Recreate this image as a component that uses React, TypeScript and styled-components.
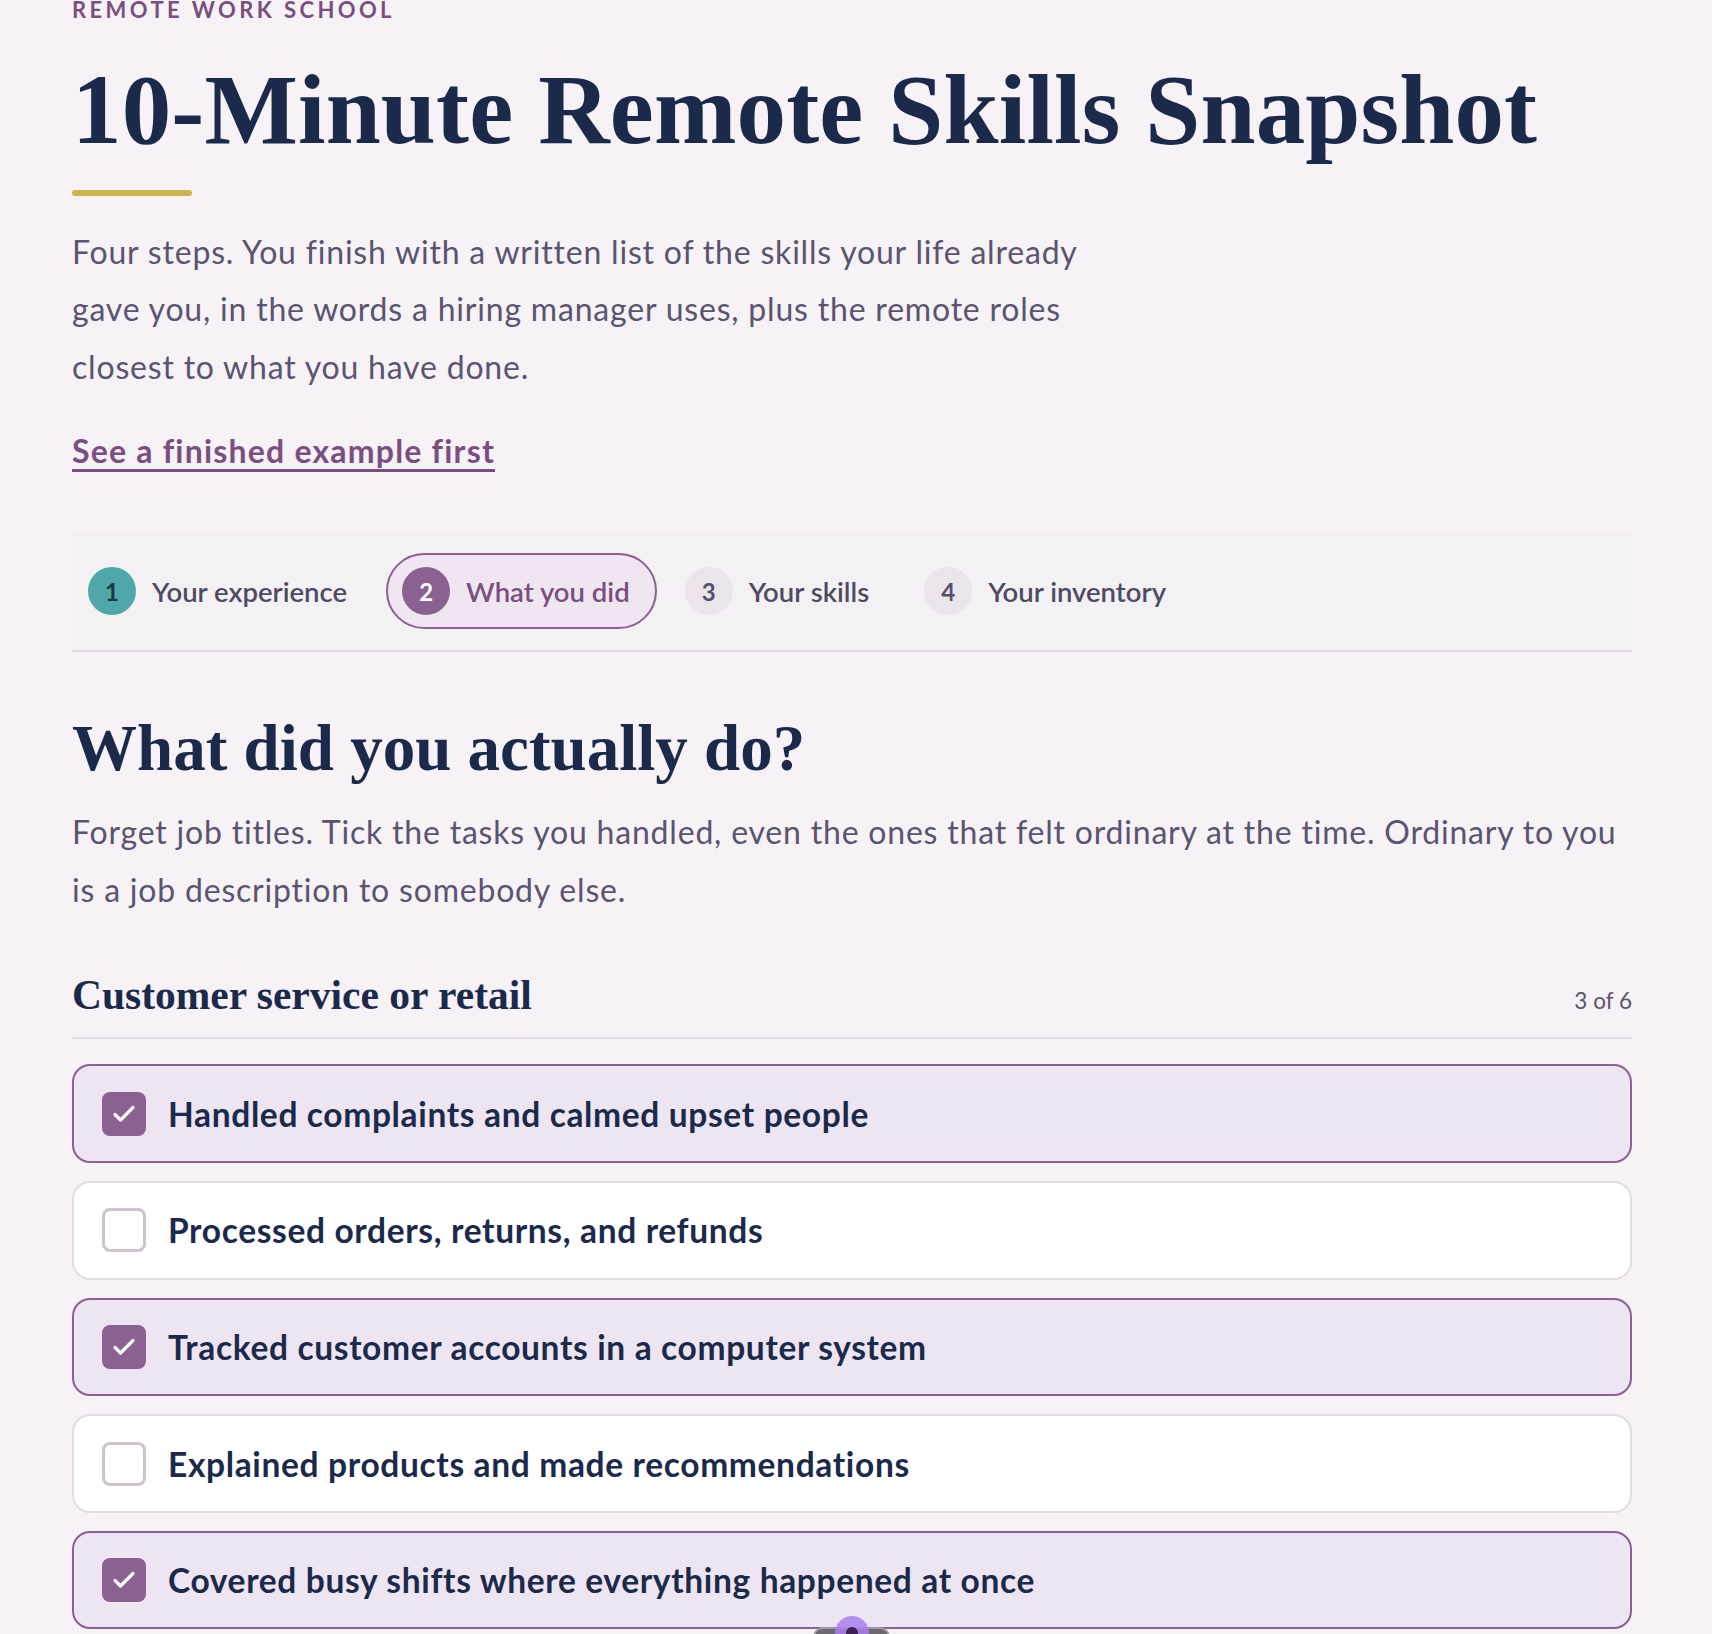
import styled, { createGlobalStyle, css } from 'styled-components';

const GlobalStyle = createGlobalStyle`
  html, body {
    margin: 0;
    padding: 0;
    background: #f6f2f6;
  }
  body {
    font-family: Lato, "Noto Sans", sans-serif;
    color: #1b2a4b;
    overflow: hidden;
  }
  * {
    box-sizing: border-box;
  }
`;

const SERIF = `"Liberation Serif", "DejaVu Serif", serif`;

const Page = styled.main`
  width: 1560px;
  margin-left: 72px;
`;

const Eyebrow = styled.p`
  margin: 0;
  font-size: 22px;
  line-height: 20px;
  font-weight: 700;
  letter-spacing: 0.155em;
  text-transform: uppercase;
  color: #7a4f80;
`;

const Title = styled.h1`
  margin: 36px 0 0;
  font-family: ${SERIF};
  font-size: 99px;
  line-height: 1.1;
  font-weight: 700;
  color: #1b2a4b;
  letter-spacing: 0.15px;
`;

// 제목 아래 금색 강조선
const Accent = styled.div`
  width: 120px;
  height: 6px;
  margin-top: 25px;
  border-radius: 3px;
  background: #cdb54c;
`;

const Lead = styled.p<{ $width?: number; $gap: number }>`
  margin: ${({ $gap }) => $gap}px 0 0;
  max-width: ${({ $width }) => ($width ? `${$width}px` : 'none')};
  font-size: 32px;
  line-height: 57.6px;
  letter-spacing: 0.8px;
  color: #5a5470;
`;

const ExampleLink = styled.a`
  display: inline-block;
  margin-top: 26px;
  font-size: 32px;
  line-height: 57.6px;
  font-weight: 700;
  letter-spacing: 1.2px;
  color: #7a4f80;
  text-decoration: underline;
  text-decoration-thickness: 3px;
  text-underline-offset: 6px;
  cursor: pointer;
`;

const Stepper = styled.nav`
  display: flex;
  align-items: center;
  gap: 12px;
  margin-top: 53px;
  padding: 21px 0;
  background: #f3f1f3;
  border-bottom: 2px solid #dedadf;
`;

const Step = styled.div<{ $active?: boolean }>`
  display: flex;
  align-items: center;
  gap: 16px;
  height: 76px;
  padding: 0 25px 0 14px;
  border: 2px solid transparent;
  border-radius: 38px;
  font-size: 27.5px;
  font-weight: 600;
  color: #4f4a63;

  ${({ $active }) =>
    $active &&
    css`
      border-color: #8a6191;
      background: #efe6f2;
      color: #7a4f80;
    `}
`;

type StepState = 'done' | 'current' | 'todo';

const stepColors: Record<StepState, { bg: string; fg: string }> = {
  done: { bg: '#4fa7aa', fg: '#173a46' },
  current: { bg: '#8a6191', fg: '#ffffff' },
  todo: { bg: '#ece4ec', fg: '#55506a' },
};

const StepNumber = styled.span<{ $state: StepState }>`
  display: flex;
  align-items: center;
  justify-content: center;
  width: 48px;
  height: 48px;
  border-radius: 50%;
  font-size: 24px;
  font-weight: 700;
  background: ${({ $state }) => stepColors[$state].bg};
  color: ${({ $state }) => stepColors[$state].fg};
`;

const SectionTitle = styled.h2`
  margin: 57px 0 0;
  font-family: ${SERIF};
  font-size: 65px;
  line-height: 1.2;
  font-weight: 700;
  color: #1b2a4b;
`;

const GroupHeader = styled.div`
  display: flex;
  justify-content: space-between;
  align-items: baseline;
  margin-top: 53px;
  padding-bottom: 18px;
  border-bottom: 2px solid #dedadf;
`;

const GroupTitle = styled.h3`
  margin: 0;
  font-family: ${SERIF};
  font-size: 41.5px;
  line-height: 48px;
  font-weight: 700;
  color: #1b2a4b;
`;

const GroupCount = styled.span`
  font-size: 22.5px;
  color: #5a5470;
`;

const TaskList = styled.ul`
  display: flex;
  flex-direction: column;
  gap: 18px;
  margin: 25px 0 0;
  padding: 0;
  list-style: none;
`;

const TaskRow = styled.li<{ $checked: boolean }>`
  display: flex;
  align-items: center;
  gap: 22px;
  height: 98.6px;
  padding: 0 28px;
  border: 2px solid ${({ $checked }) => ($checked ? '#8a6191' : '#e2dde3')};
  border-radius: 18px;
  background: ${({ $checked }) => ($checked ? '#ede5f1' : '#ffffff')};
  font-size: 33.5px;
  font-weight: 700;
  letter-spacing: 0.65px;
  color: #1b2a4b;
  cursor: pointer;
`;

const Checkbox = styled.span<{ $checked: boolean }>`
  display: flex;
  align-items: center;
  justify-content: center;
  flex: none;
  width: 44px;
  height: 44px;
  border-radius: 8px;
  border: 3px solid ${({ $checked }) => ($checked ? '#8a6191' : '#cec3cf')};
  background: ${({ $checked }) => ($checked ? '#8a6191' : '#ffffff')};
`;

// 화면 하단에 걸쳐 있는 떠 있는 도구 배지
const FloatingDock = styled.div`
  position: fixed;
  left: 813px;
  top: 1627px;
  width: 77px;
  height: 30px;
  border-radius: 10px;
  border: 2px solid #a09ca2;
  background: #6e6971;
`;

const FloatingDot = styled.div`
  position: fixed;
  left: 835px;
  top: 1616px;
  width: 34px;
  height: 34px;
  border-radius: 50%;
  background: rgba(170, 128, 240, 0.85);
  display: flex;
  justify-content: center;
  padding-top: 11px;

  &::after {
    content: '';
    width: 12px;
    height: 12px;
    border-radius: 50%;
    background: #3c2252;
  }
`;

const steps: { label: string; state: StepState }[] = [
  { label: 'Your experience', state: 'done' },
  { label: 'What you did', state: 'current' },
  { label: 'Your skills', state: 'todo' },
  { label: 'Your inventory', state: 'todo' },
];

const tasks = [
  { text: 'Handled complaints and calmed upset people', checked: true },
  { text: 'Processed orders, returns, and refunds', checked: false },
  { text: 'Tracked customer accounts in a computer system', checked: true },
  { text: 'Explained products and made recommendations', checked: false },
  { text: 'Covered busy shifts where everything happened at once', checked: true },
];

const CheckMark = () => (
  <svg width="26" height="26" viewBox="0 0 26 26" fill="none">
    <path
      d="M4 13.5l5.5 5.5L22 6.5"
      stroke="#ffffff"
      strokeWidth="3.2"
      strokeLinecap="round"
      strokeLinejoin="round"
    />
  </svg>
);

const App = () => {
  const checkedCount = tasks.filter((task) => task.checked).length;

  return (
    <>
      <GlobalStyle />
      <Page>
        <Eyebrow>Remote Work School</Eyebrow>
        <Title>10-Minute Remote Skills Snapshot</Title>
        <Accent />
        <Lead $gap={27} $width={1020}>
          Four steps. You finish with a written list of the skills your life already gave you, in
          the words a hiring manager uses, plus the remote roles closest to what you have done.
        </Lead>
        <ExampleLink>See a finished example first</ExampleLink>

        <Stepper>
          {steps.map((step, index) => (
            <Step key={step.label} $active={step.state === 'current'}>
              <StepNumber $state={step.state}>{index + 1}</StepNumber>
              {step.label}
            </Step>
          ))}
        </Stepper>

        <SectionTitle>What did you actually do?</SectionTitle>
        <Lead $gap={16}>
          Forget job titles. Tick the tasks you handled, even the ones that felt ordinary at the
          time. Ordinary to you is a job description to somebody else.
        </Lead>

        <GroupHeader>
          <GroupTitle>Customer service or retail</GroupTitle>
          <GroupCount>
            {checkedCount} of {tasks.length + 1}
          </GroupCount>
        </GroupHeader>

        <TaskList>
          {tasks.map((task) => (
            <TaskRow key={task.text} $checked={task.checked}>
              <Checkbox $checked={task.checked}>{task.checked && <CheckMark />}</Checkbox>
              {task.text}
            </TaskRow>
          ))}
        </TaskList>
      </Page>

      <FloatingDock />
      <FloatingDot />
    </>
  );
};

export default App;
